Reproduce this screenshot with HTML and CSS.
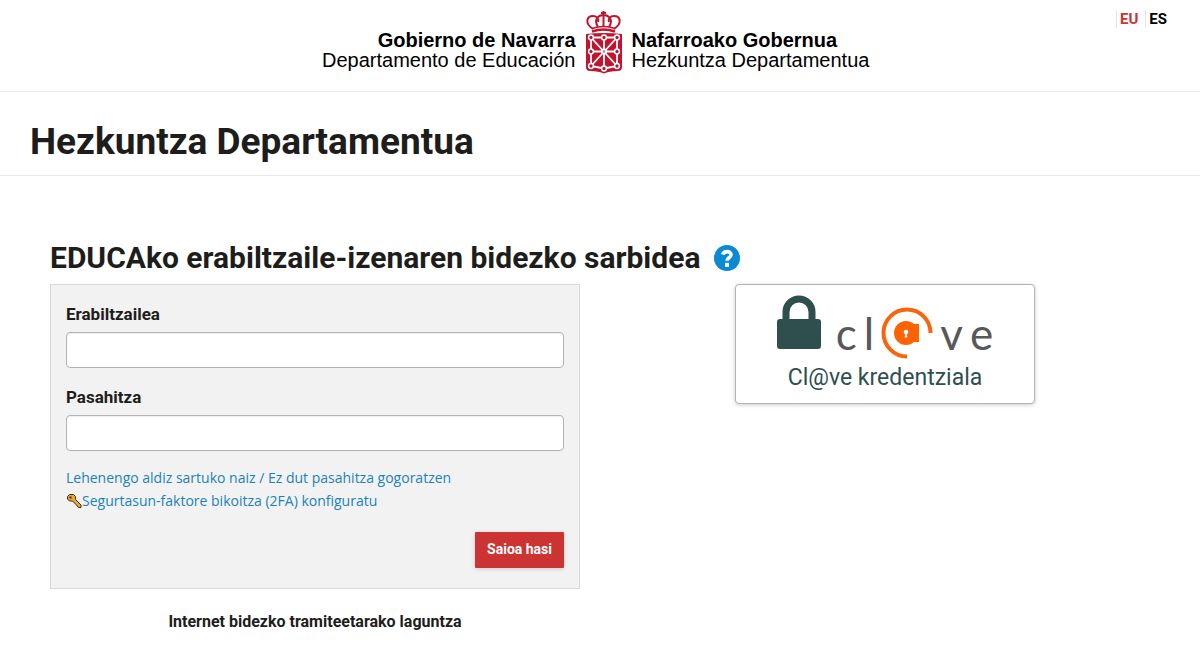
FILE: index.html
```html
<!DOCTYPE html>
<html lang="eu">
<head>
<meta charset="utf-8">
<meta name="viewport" content="width=device-width, initial-scale=1">
<title>Hezkuntza Departamentua</title>
<link rel="stylesheet" href="styles.css">
</head>
<body>
<header class="site-header">
  <div class="brand">
    <p class="brand-text brand-left"><strong>Gobierno de Navarra</strong><span>Departamento de Educación</span></p>
    <svg class="brand-shield" viewBox="0 0 38 64" aria-hidden="true">
      <g fill="none" stroke="#c1142f" stroke-width="2">
        <path d="M8 19C-1 13 2 6 8 6c4 0 6 3 5 6M29 19c9-6 6-13 0-13-4 0-6 3-5 6"/>
        <path d="M13 17C8 9 14 5 18.500 5S29 9 24 17M18.500 1v15M16 3h5"/>
        <path d="M7 18.500c7-2.500 16-2.500 23 0" stroke-width="1.500"/>
        <path d="M7 21.500c7-2.500 16-2.500 23 0" stroke-width="2.400"/>
      </g>
      <path fill="#c1142f" d="M1 24q18-2 36 0v33q0 4-4 4-9 0-14 2.500Q14 61 5 61q-4 0-4-4z"/>
      <g fill="none" stroke="#fff" stroke-width="1.800">
        <path d="M6 27.500h26v28.500l-13 2.500L6 56zM6 27.500L32 56M32 27.500L6 56M19 27.500v31M6 41.500h26"/>
      </g>
      <g fill="#c1142f" stroke="#fff" stroke-width="1.500">
        <circle cx="6" cy="27.500" r="2.400"/><circle cx="19" cy="27.500" r="2.400"/><circle cx="32" cy="27.500" r="2.400"/>
        <circle cx="6" cy="41.500" r="2.400"/><circle cx="32" cy="41.500" r="2.400"/>
        <circle cx="6" cy="56" r="2.400"/><circle cx="19" cy="58.500" r="2.400"/><circle cx="32" cy="56" r="2.400"/>
        <circle cx="19" cy="41.500" r="2.200" fill="#d3949f"/>
      </g>
    </svg>
    <p class="brand-text"><strong>Nafarroako Gobernua</strong><span>Hezkuntza Departamentua</span></p>
  </div>
  <nav class="languages" aria-label="Hizkuntza">
    <a class="language language-current" href="#eu">EU</a>
    <a class="language" href="#es">ES</a>
  </nav>
</header>
<div class="title-bar"><h1 class="page-title">Hezkuntza Departamentua</h1></div>
<main class="content">
  <h2 class="access-title">EDUCAko erabiltzaile-izenaren bidezko sarbidea
    <a class="help" href="#help" aria-label="Laguntza"><svg class="help-icon" viewBox="0 0 26 26" aria-hidden="true"><circle cx="13" cy="13" r="13" fill="#0a8ad2"/><path d="M8.700 9.600C9.800 5.800 17 5.500 17 9.800c0 3-4 3-4 6" fill="none" stroke="#fff" stroke-width="3.600"/><path d="M11 17.800h4v4h-4z" fill="#fff"/></svg></a>
  </h2>
  <div class="columns">
    <div class="column">
      <form class="login">
        <label class="field-label" for="user">Erabiltzailea</label>
        <input class="field" id="user" type="text">
        <label class="field-label" for="password">Pasahitza</label>
        <input class="field" id="password" type="password">
        <div class="links">
          <a class="link" href="#recover">Lehenengo aldiz sartuko naiz / Ez dut pasahitza gogoratzen</a>
          <a class="link" href="#2fa"><svg class="key" viewBox="0 0 16 16" aria-hidden="true"><path d="M1.500 3.500l2-2h4l2 2v3l5.500 5.500v2.500h-2.500l-2-2.500-4-4h-3l-2-2z" fill="#e9a52e" stroke="#40300f"/><path d="M3.500 3.500h2v2h-2z" fill="#40300f"/></svg>Segurtasun-faktore bikoitza (2FA) konfiguratu</a>
        </div>
        <button class="submit" type="submit">Saioa hasi</button>
      </form>
      <p class="support">Internet bidezko tramiteetarako laguntza</p>
    </div>
    <div class="column">
      <button class="clave" type="button">
        <span class="clave-logo">
          <svg class="lock" viewBox="0 0 44 54" aria-hidden="true"><path d="M9 28V17a13 13 0 0 1 26 0v11" fill="none" stroke="#2f4f4f" stroke-width="7"/><rect y="24" width="44" height="30" rx="3" fill="#2f4f4f"/></svg>
          <span class="wordmark">
            <span>c</span><span>l</span>
            <svg class="at" viewBox="0 0 52 52" role="img" aria-label="@"><path d="M26 49.500A23.500 23.500 0 1 1 49.500 26" fill="none" stroke="#f8650c" stroke-width="4"/><circle cx="25" cy="26" r="12" fill="#ff6200"/><path d="M28 17h10v18H28z" fill="#ff6200"/><circle cx="25" cy="25" r="2.300" fill="#fff"/><path d="M24.300 25h1.400l.6 5.500h-2.600z" fill="#fff"/></svg>
            <span>v</span><span>e</span>
          </span>
        </span>
        <span class="clave-label">Cl@ve kredentziala</span>
      </button>
    </div>
  </div>
</main>
</body>
</html>
```
FILE: styles.css
```css
* { box-sizing: border-box; }
body { margin: 0; background: #fff; color: #1d1d1b; font: 14px/20px "Open Sans", sans-serif; }
a { text-decoration: none; }

.site-header { position: relative; padding: 10px 32px 17px; border-bottom: 1px solid #eaeaea; }
.brand { display: grid; grid-template-columns: 1fr auto 1fr; gap: 9px; padding-left: 7px; }
.brand-text { display: flex; flex-direction: column; margin: 0; padding-top: 20px; color: #000; font: 20px/20px "Liberation Sans", Arial, sans-serif; }
.brand-left { text-align: right; }
.brand-shield { width: 38px; height: 64px; }
.languages { position: absolute; top: 10px; right: 30px; display: flex; gap: 4px; }
.language { padding: 0 3px; border-left: 1px solid #e6e6e6; color: #000; font: 700 15px/18px Roboto, sans-serif; }
.language-current { color: #c33; }

.title-bar { padding: 22px 30px 5px; border-bottom: 1px solid #eaeaea; }
.page-title { margin: 0; font: 700 37px/56px Roboto, sans-serif; }

.content { padding: 62px 50px 16px; }
.access-title { display: flex; align-items: center; gap: 14px; margin: 0; font: 700 30px/40px Roboto, sans-serif; }
.help { display: flex; }
.help-icon { width: 26px; height: 26px; }

.columns { display: grid; grid-template-columns: 1fr 1fr; align-items: start; gap: 40px; padding-top: 6px; }
.column { display: flex; flex-direction: column; }
.login { display: flex; flex-direction: column; padding: 15px 15px 20px; background: #f2f2f2; border: 1px solid #d9d9d9; }
.field-label { padding-top: 4px; margin-bottom: 8px; font: 700 17px/20px Roboto, sans-serif; }
.field { height: 36px; margin-bottom: 15px; padding: 6px 12px; background: #fff; border: 1px solid #b3b3b3; border-radius: 4px; box-shadow: inset 0 1px 1px #eee; font: inherit; }
.links { display: flex; flex-direction: column; }
.link { display: flex; align-items: center; color: #1a82bd; line-height: 23px; }
.key { width: 16px; height: 16px; }
.submit { align-self: flex-end; margin-top: 20px; padding: 0 12px 2px; border: 0; border-radius: 1px; background: #c33; box-shadow: 0 1px 4px #ccc; color: #fff; font: 700 14px/34px Roboto, sans-serif; }
.support { margin: 23px 0 0; text-align: center; font: 700 16px/20px Roboto, sans-serif; }

.clave { align-self: center; width: 300px; padding: 10px 0 9px; border: 1px solid #b3b3b3; border-radius: 4px; background: #fff; box-shadow: 0 1px 4px #ccc; color: #2f4f4f; }
.clave-logo { display: flex; justify-content: center; align-items: flex-start; gap: 15px; height: 67px; }
.lock { width: 44px; height: 54px; }
.wordmark { display: flex; align-items: center; gap: 7px; padding-top: 12px; color: #58585a; font: 44px/48px Lato, sans-serif; }
.at { width: 52px; height: 52px; }
.clave-label { display: block; font: 23px/32px Roboto, sans-serif; }
```
